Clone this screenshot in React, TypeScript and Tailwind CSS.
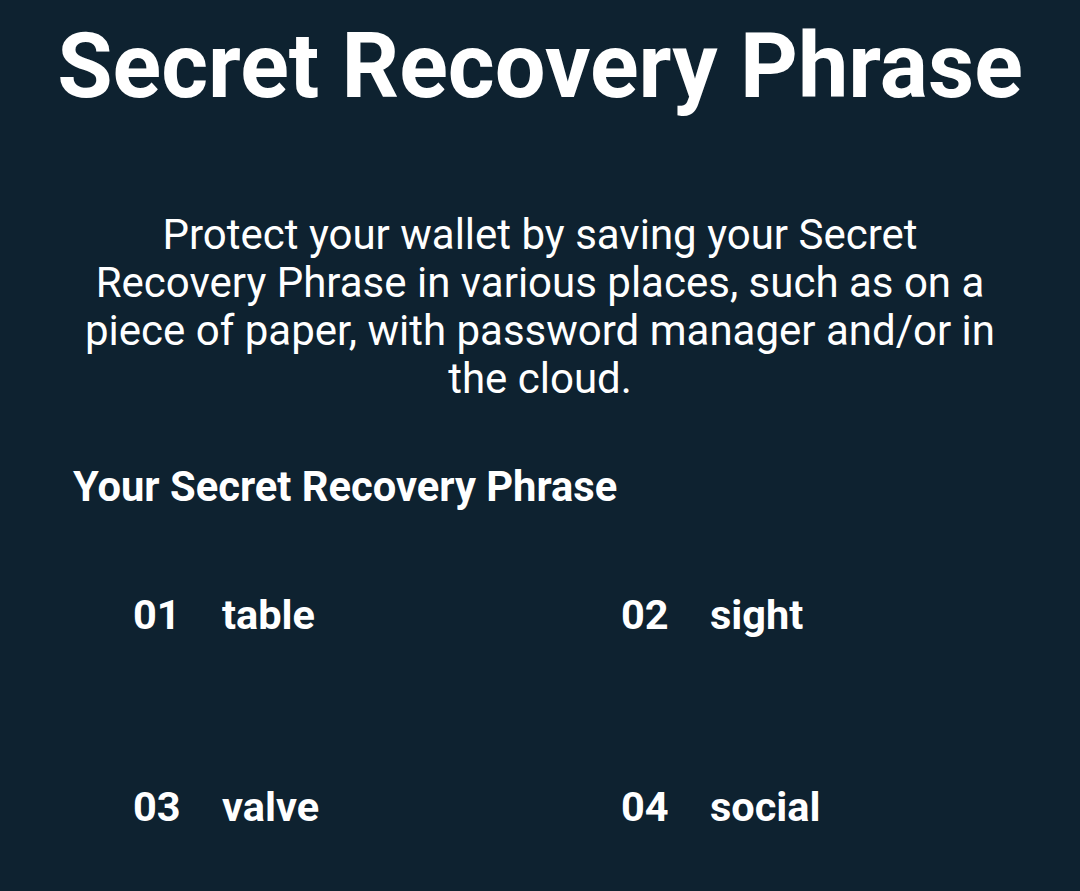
import React from "react";

const words = [
  ["01", "table"],
  ["02", "sight"],
  ["03", "valve"],
  ["04", "social"],
];

export default function App() {
  return (
    <div className="w-[1080px] h-[891px] overflow-hidden bg-[#0e2230] text-white" style={{ fontFamily: "Roboto, 'Liberation Sans', sans-serif" }}>
      <h1 className="text-center font-bold text-[90px] leading-[100px] pt-[17px]">Secret Recovery Phrase</h1>
      <p className="mt-[94px] mx-auto w-[1000px] text-center text-[42px] leading-[48px]">
        Protect your wallet by saving your Secret
        <br />
        Recovery Phrase in various places, such as on a
        <br />
        piece of paper, with password manager and/or in
        <br />
        the cloud.
      </p>
      <h2 className="mt-[59px] ml-[73px] font-bold text-[41.7px] leading-[50px]">Your Secret Recovery Phrase</h2>
      <div className="grid grid-cols-[488px_1fr] ml-[133px] mt-[78px] w-[800px] gap-y-[142px]">
        {words.map(([n, w]) => (
          <div key={n} className="flex font-bold text-[41.5px] leading-[50px]">
            <span className="w-[89px]">{n}</span>
            <span>{w}</span>
          </div>
        ))}
      </div>
    </div>
  );
}
